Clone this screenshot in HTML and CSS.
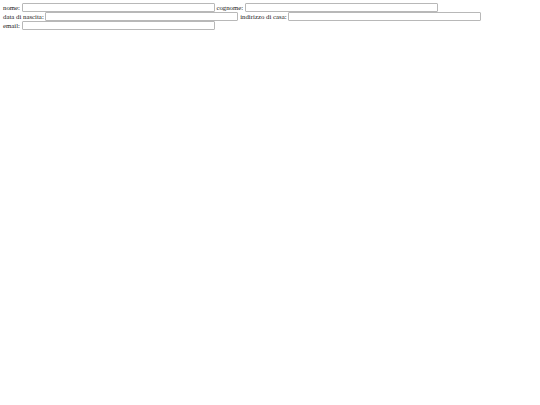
FILE: index.html
```html
<!DOCTYPE html>
<html lang="it">
<head>
<meta charset="utf-8">
<title>Form</title>
<link rel="stylesheet" href="styles.css">
</head>
<body>
<form class="form">
<div class="row"><label class="lbl">nome:</label> <input class="field" type="text"> <label class="lbl">cognome:</label> <input class="field" type="text"></div>
<div class="row"><label class="lbl">data di nascita:</label> <input class="field" type="text"> <label class="lbl">indirizzo di casa:</label> <input class="field" type="text"></div>
<div class="row"><label class="lbl">email:</label> <input class="field" type="text"></div>
</form>
</body>
</html>
```
FILE: styles.css
```css
html, body {
  background: #ffffff;
}
body {
  margin: 3px 3px;
  font-family: "Liberation Serif", "Times New Roman", serif;
  font-size: 6.8px;
  color: #222;
}
.form {
  margin: 0;
}
.row {
  height: 9px;
  line-height: 9px;
  white-space: nowrap;
}
.lbl {
  vertical-align: top;
}
.field {
  box-sizing: border-box;
  width: 193px;
  height: 9px;
  margin: 0;
  padding: 0;
  border: 1px solid #b8b8b8;
  border-radius: 1px;
  vertical-align: top;
  font-size: 6px;
  background: #fff;
}
```
